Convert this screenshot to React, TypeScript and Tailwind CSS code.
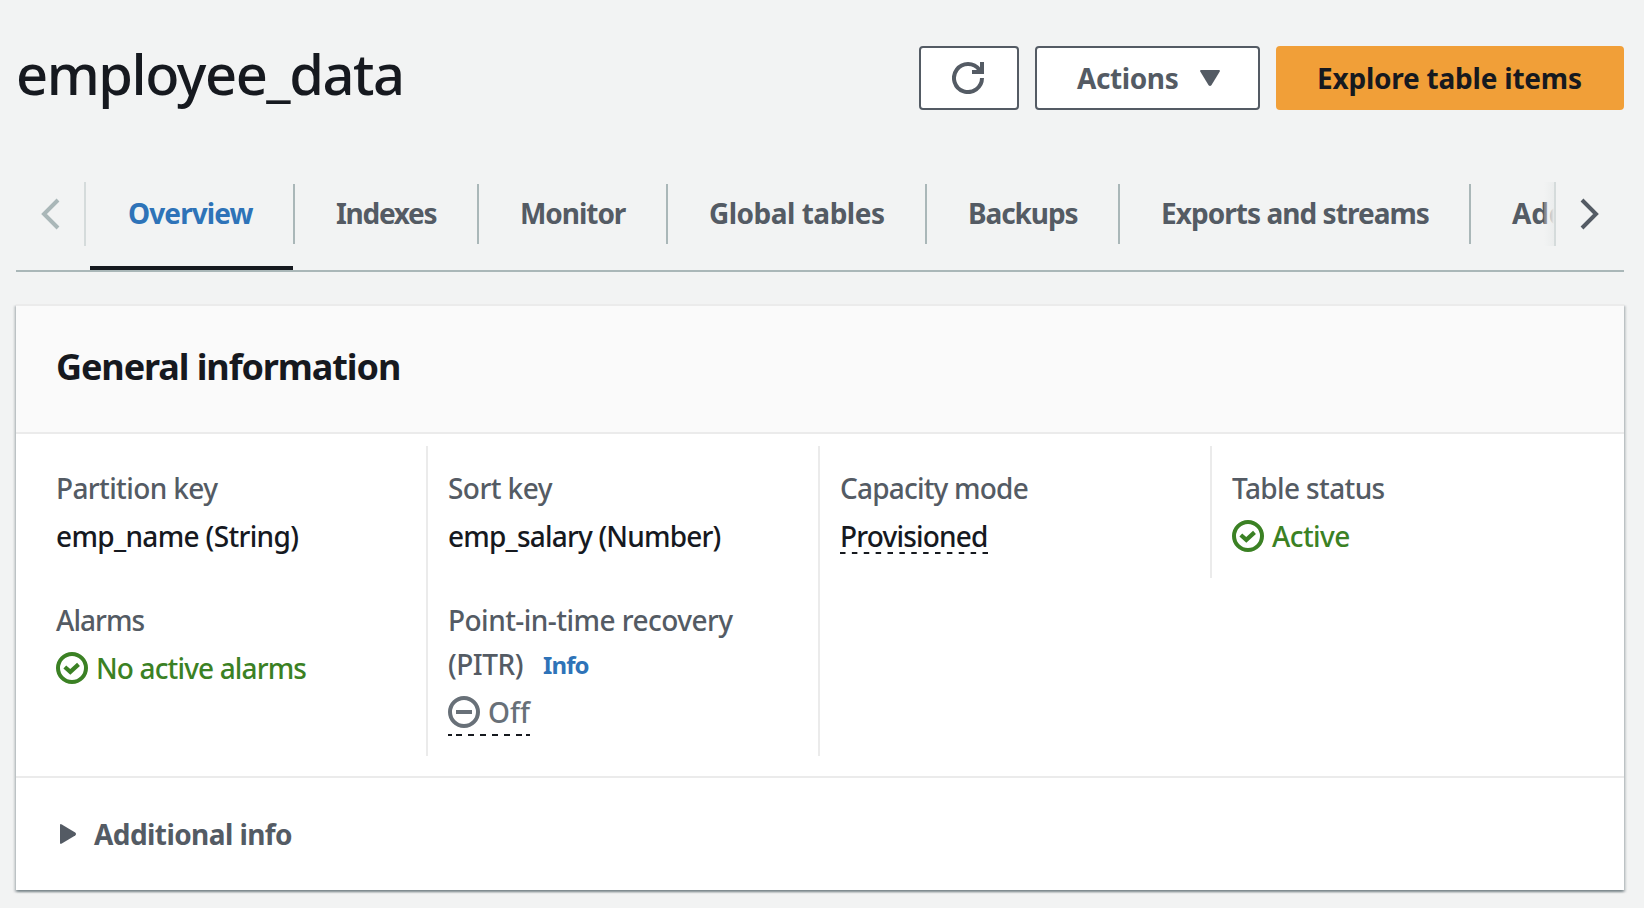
import type { ReactNode } from "react";

type Tab = { label: string; tracking: string; width: string };

const TABS: Tab[] = [
  { label: "Indexes", tracking: "tracking-[-1.3px]", width: "w-[184px]" },
  { label: "Monitor", tracking: "tracking-[-1.05px]", width: "w-[189px]" },
  { label: "Global tables", tracking: "tracking-[-0.5px]", width: "w-[259px]" },
  { label: "Backups", tracking: "tracking-[-1.1px]", width: "w-[193px]" },
  { label: "Exports and streams", tracking: "tracking-[-0.95px]", width: "w-[351px]" },
  { label: "Additional settings", tracking: "tracking-[-0.1px]", width: "w-[300px]" },
];

function RefreshIcon() {
  return (
    <svg className="mr-0.5 size-8" viewBox="0 0 32 32" fill="none" stroke="currentColor" strokeWidth="4">
      <path d="M30 16a14 14 0 1 1-2.6-8.1L29 10" />
      <path d="M30 0v10H20" />
    </svg>
  );
}

function Chevron({ direction }: { direction: "left" | "right" }) {
  return (
    <svg className="h-8 w-5 shrink-0" viewBox="0 0 20 32" fill="none" stroke="currentColor" strokeWidth="4">
      <path d={direction === "left" ? "M18 2 4 16l14 14" : "M2 2l14 14L2 30"} />
    </svg>
  );
}

function CheckIcon() {
  return (
    <svg className="size-8 shrink-0" viewBox="0 0 32 32" fill="none" stroke="currentColor">
      <circle cx="16" cy="16" r="14" strokeWidth="4" />
      <path d="M8.8 15l5.5 4.9 8.2-7.5" strokeWidth="4.2" />
    </svg>
  );
}

function MinusIcon() {
  return (
    <svg className="size-8 shrink-0" viewBox="0 0 32 32" fill="none" stroke="currentColor" strokeWidth="4">
      <circle cx="16" cy="16" r="14" />
      <path d="M8 16h16" />
    </svg>
  );
}

function Field({ label, children }: { label: ReactNode; children: ReactNode }) {
  return (
    <div className="flex flex-col items-start gap-1">
      <div className="text-[#545b64]">{label}</div>
      {children}
    </div>
  );
}

function Column({ className, children }: { className: string; children: ReactNode }) {
  return <div className={`flex flex-col gap-10 pt-5 ${className}`}>{children}</div>;
}

export default function App() {
  return (
    <div className="h-[908px] w-[1644px] overflow-hidden bg-[#f2f3f3] pt-[46px] pr-5 pl-4 font-['Noto_Sans',sans-serif] text-[28px] leading-[44px] font-medium whitespace-nowrap text-[#16191f]">
      <header className="flex h-16 items-start justify-between">
        <h1 className="-mt-[9px] text-[56px] leading-[72px] tracking-[-1.45px]">employee_data</h1>
        <div className="flex gap-4 font-bold text-[#545b64]">
          <button className="flex h-16 w-[100px] items-center justify-center rounded-[4px] border-2 border-[#545b64] bg-white">
            <RefreshIcon />
          </button>
          <button className="flex h-16 w-[225px] items-center rounded-[4px] border-2 border-[#545b64] bg-white pl-10">
            <span className="w-[123px] text-left tracking-[-0.4px]">Actions</span>
            <svg className="h-4 w-5" viewBox="0 0 20 16" fill="currentColor">
              <path d="M1.2 0h17.6q1.8 0 .8 1.8l-8.2 13.4q-1.4 1.6-2.8 0L.4 1.8Q-.6 0 1.2 0z" />
            </svg>
          </button>
          <button className="flex h-16 w-[348px] items-center rounded-[4px] bg-[#f19f38] pl-[41px] tracking-[-0.22px] text-[#16191f]">
            Explore table items
          </button>
        </div>
      </header>

      <nav className="mt-[72px] flex h-[90px] items-start border-b-2 border-[#aab7b8] font-bold text-[#545b64]">
        <div className="flex h-16 w-[70px] items-center border-r-2 border-[#d5dbdb] pl-6 text-[#aab7b8]">
          <Chevron direction="left" />
        </div>
        <div className="relative h-full w-[1468px] overflow-hidden">
          <div className="flex h-full">
            <div className="ml-1 flex h-full w-[205px] shrink-0 flex-col justify-between">
              <span className="mt-0.5 flex h-[60px] items-center border-r-2 border-[#aab7b8] pb-0.5 pl-[38px] tracking-[-0.9px] text-[#2e73b8]">
                Overview
              </span>
              <span className="h-1 w-[203px] bg-[#16191f]" />
            </div>
            {TABS.map((t) => (
              <span
                key={t.label}
                className={`mt-0.5 flex h-[60px] shrink-0 items-center border-r-2 border-[#aab7b8] pb-0.5 pl-[41px] ${t.width} ${t.tracking}`}
              >
                {t.label}
              </span>
            ))}
          </div>
          <span className="absolute top-0 right-0 h-16 w-2.5 bg-gradient-to-r from-[#f2f3f3]/20 to-[#ebeded]" />
        </div>
        <div className="flex h-16 w-[70px] items-center border-l-2 border-[#d5dbdb] pl-6">
          <Chevron direction="right" />
        </div>
      </nav>

      <section className="mt-8 h-[586px] border-t-2 border-[#ebebeb] bg-white shadow-[0_2px_2px_0_rgba(0,28,36,0.3),2px_2px_2px_0_rgba(0,28,36,0.15),-2px_2px_2px_0_rgba(0,28,36,0.15)]">
        <h2 className="h-32 border-b-2 border-[#ebebeb] bg-[#fafafa] pt-[39px] pl-10 text-[36px] font-bold tracking-[-1.1px]">
          General information
        </h2>
        <div className="flex h-[342px] items-start pt-3">
          <Column className="h-[310px] w-[412px] border-r-2 border-[#ebebeb] pl-10">
            <Field label={<span className="tracking-[-0.62px]">Partition key</span>}>
              <span className="tracking-[-0.66px]">emp_name (String)</span>
            </Field>
            <Field label={<span className="tracking-[-0.95px]">Alarms</span>}>
              <span className="flex items-center gap-2 tracking-[-0.86px] text-[#3b8124]">
                <CheckIcon />
                No active alarms
              </span>
            </Field>
          </Column>
          <Column className="h-[310px] w-[392px] border-r-2 border-[#ebebeb] pl-5">
            <Field label={<span className="tracking-[-0.55px]">Sort key</span>}>
              <span className="tracking-[-0.8px]">emp_salary (Number)</span>
            </Field>
            <Field
              label={
                <>
                  <div className="tracking-[-0.54px]">Point-in-time recovery</div>
                  <div className="flex">
                    <span className="w-[95px] tracking-[-0.5px]">(PITR)</span>
                    <span className="mt-px h-[43px] text-[24px] font-bold tracking-[-0.9px] text-[#2e73b8]">Info</span>
                  </div>
                </>
              }
            >
              <span className="flex flex-col text-[#687078]">
                <span className="flex h-11 items-center gap-2">
                  <MinusIcon />
                  Off
                </span>
                <svg className="h-0.5 w-[82px] text-[#16191f]" viewBox="0 0 82 2" stroke="currentColor" strokeWidth="2">
                  <path d="M0 1h82" strokeDasharray="4 4 6 6 6 6 6 6 6 6 6 6 6 4 4 0" />
                </svg>
              </span>
            </Field>
          </Column>
          <Column className="h-[310px] w-[392px] pl-5">
            <Field label={<span className="tracking-[-0.8px]">Capacity mode</span>}>
              <span className="flex flex-col">
                <span className="h-[38px] w-[148px] tracking-[-0.82px]">Provisioned</span>
                <svg className="h-0.5 w-[148px]" viewBox="0 0 148 2" stroke="currentColor" strokeWidth="2">
                  <path d="M0 1h148" strokeDasharray="5.5 6.375" />
                </svg>
              </span>
            </Field>
          </Column>
          <Column className="-ml-0.5 h-[132px] border-l-2 border-[#ebebeb] pl-5">
            <Field label={<span className="tracking-[-0.62px]">Table status</span>}>
              <span className="flex items-center gap-2 tracking-[-0.6px] text-[#3b8124]">
                <CheckIcon />
                Active
              </span>
            </Field>
          </Column>
        </div>
        <div className="flex h-[114px] items-center border-t-2 border-[#ebebeb] pl-11 font-bold tracking-[-0.58px] text-[#545b64]">
          <svg className="mr-[18px] h-5 w-4" viewBox="0 0 16 20" fill="currentColor">
            <path d="M0 1.2Q0-.6 1.8.4l13.4 8.2q1.6 1.4 0 2.8L1.8 19.6Q0 20.6 0 18.8z" />
          </svg>
          Additional info
        </div>
      </section>
    </div>
  );
}
